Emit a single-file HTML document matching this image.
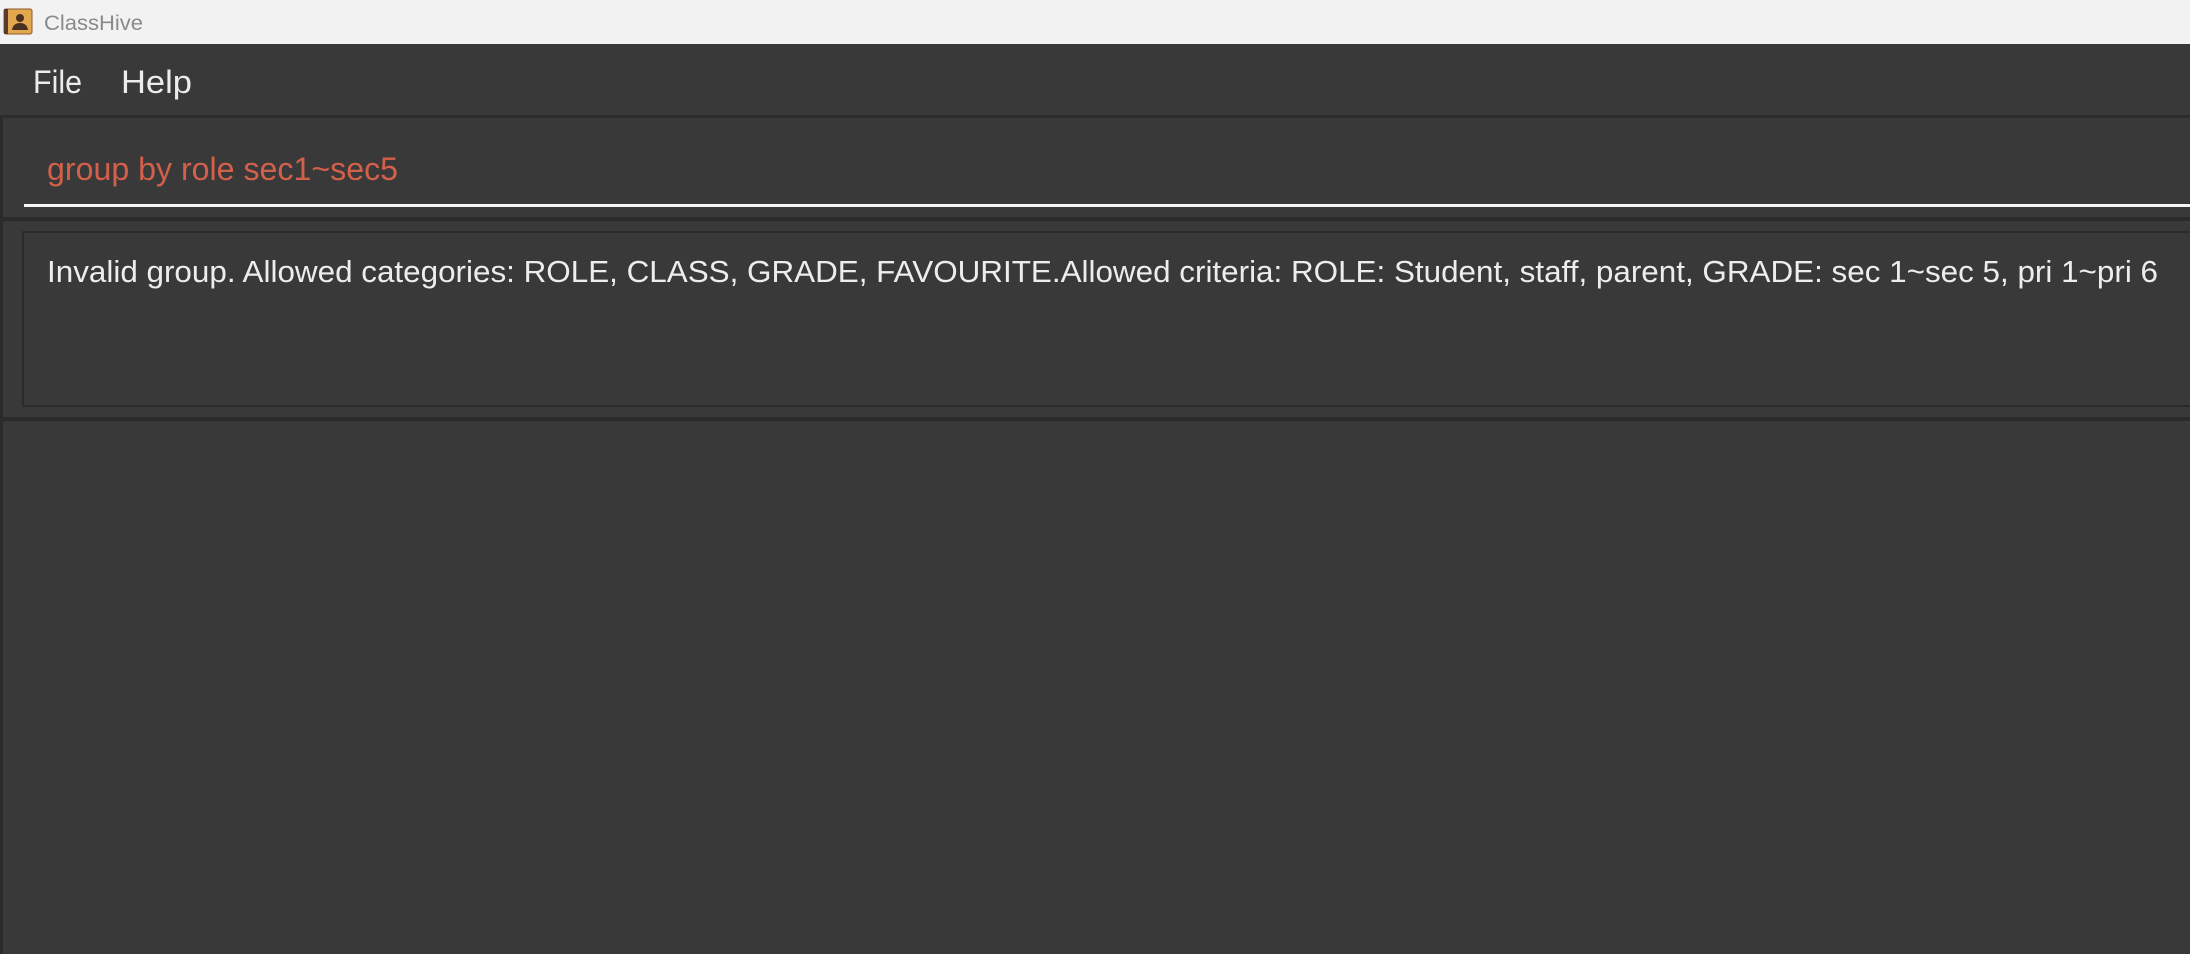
<!DOCTYPE html>
<html><head><style>
html,body{margin:0;padding:0;width:2190px;height:954px;overflow:hidden;background:#393939;}
svg{display:block}
</style></head><body>
<svg width="2190" height="954" xmlns="http://www.w3.org/2000/svg" font-family="'Liberation Sans', sans-serif">
<rect x="0" y="0" width="2190" height="954" fill="#393939"/>
<rect x="0" y="0" width="2190" height="44" fill="#f2f2f2"/>
<rect x="4" y="9" width="28" height="25" rx="2" fill="#e2a84e" stroke="#8a5a2a" stroke-width="1"/>
<rect x="4" y="9" width="4" height="25" fill="#5a3a2a"/>
<circle cx="20" cy="18" r="4" fill="#4a3020"/>
<path d="M12 30 Q13 23 20 23 Q27 23 28 30 Z" fill="#4a3020"/>
<text x="44" y="30" font-size="21" fill="#8a8a8a" textLength="99" lengthAdjust="spacingAndGlyphs">ClassHive</text>
<text x="33" y="93" font-size="32" fill="#ececec" textLength="49" lengthAdjust="spacingAndGlyphs">File</text>
<text x="121" y="93" font-size="32" fill="#ececec" textLength="71" lengthAdjust="spacingAndGlyphs">Help</text>
<rect x="0" y="115" width="2190" height="3" fill="#2b2b2b"/>
<rect x="0" y="115" width="3" height="839" fill="#2b2b2b"/>
<text x="47" y="180" font-size="32" fill="#d3604a" textLength="351" lengthAdjust="spacingAndGlyphs">group by role sec1~sec5</text>
<rect x="24" y="204" width="2166" height="3" fill="#f5f5f5"/>
<rect x="0" y="217" width="2190" height="4" fill="#2b2b2b"/>
<rect x="23" y="232" width="2180" height="174" fill="none" stroke="#2b2b2b" stroke-width="2"/>
<text x="47" y="282" font-size="31" fill="#ededed" textLength="2111" lengthAdjust="spacingAndGlyphs">Invalid group. Allowed categories: ROLE, CLASS, GRADE, FAVOURITE.Allowed criteria: ROLE: Student, staff, parent, GRADE: sec 1~sec 5, pri 1~pri 6</text>
<rect x="0" y="417" width="2190" height="4" fill="#2b2b2b"/>
</svg>
</body></html>
